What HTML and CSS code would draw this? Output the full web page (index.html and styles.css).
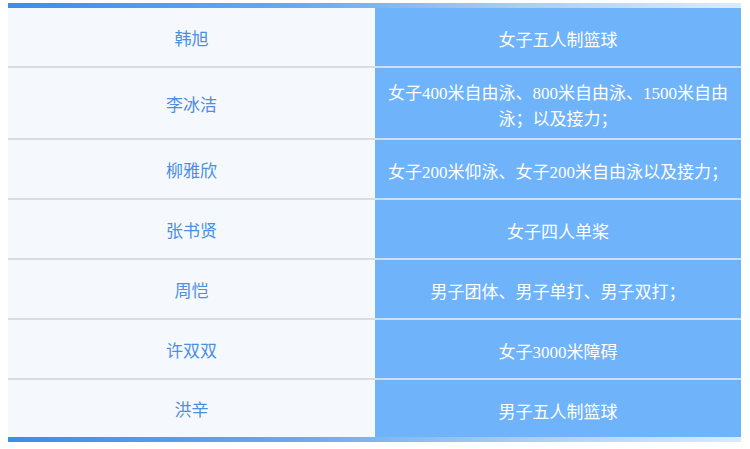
FILE: index.html
```html
<!DOCTYPE html>
<html lang="zh">
<head>
<meta charset="utf-8">
<link rel="stylesheet" href="styles.css">
</head>
<body>
<div class="board">
  <div class="bar"></div>
  <div class="grid">
    <div class="name">韩旭</div><div class="event">女子五人制篮球</div>
    <div class="name">李冰洁</div><div class="event">女子400米自由泳、800米自由泳、1500米自由泳；以及接力；</div>
    <div class="name">柳雅欣</div><div class="event">女子200米仰泳、女子200米自由泳以及接力；</div>
    <div class="name">张书贤</div><div class="event">女子四人单桨</div>
    <div class="name">周恺</div><div class="event">男子团体、男子单打、男子双打；</div>
    <div class="name">许双双</div><div class="event">女子3000米障碍</div>
    <div class="name last">洪辛</div><div class="event last">男子五人制篮球</div>
  </div>
  <div class="bar"></div>
</div>
</body>
</html>
```
FILE: styles.css
```css
html, body {
  margin: 0;
  padding: 0;
  background: #ffffff;
}
body {
  padding: 3px 9px 0 8px;
  font-family: "Liberation Serif", "Noto Sans CJK SC", serif;
  font-size: 17px;
}
.board {
  display: flex;
  flex-direction: column;
}
.bar {
  height: 5px;
  background: linear-gradient(90deg, #3b8ee8 0%, #69aaf0 40%, #a9cdf4 70%, #dcebfb 100%);
}
.grid {
  display: grid;
  grid-template-columns: 367px 1fr;
}
.name, .event {
  display: flex;
  align-items: center;
  justify-content: center;
  text-align: center;
  min-height: 58px;
  line-height: 26px;
  padding: 5px 10px 0;
  box-sizing: border-box;
}
.name {
  background: #f5f9fd;
  color: #4a8fe2;
  border-bottom: 2px solid #d9dde2;
}
.event {
  background: #6fb3fb;
  color: #ffffff;
  border-bottom: 2px solid #c9dffa;
  min-height: 60px;
  padding: 13px 10px 5px;
}
.name {
  min-height: 60px;
}
.last {
  border-bottom: 0;
  min-height: 57px;
}
.event.last {
  min-height: 57px;
}
```
